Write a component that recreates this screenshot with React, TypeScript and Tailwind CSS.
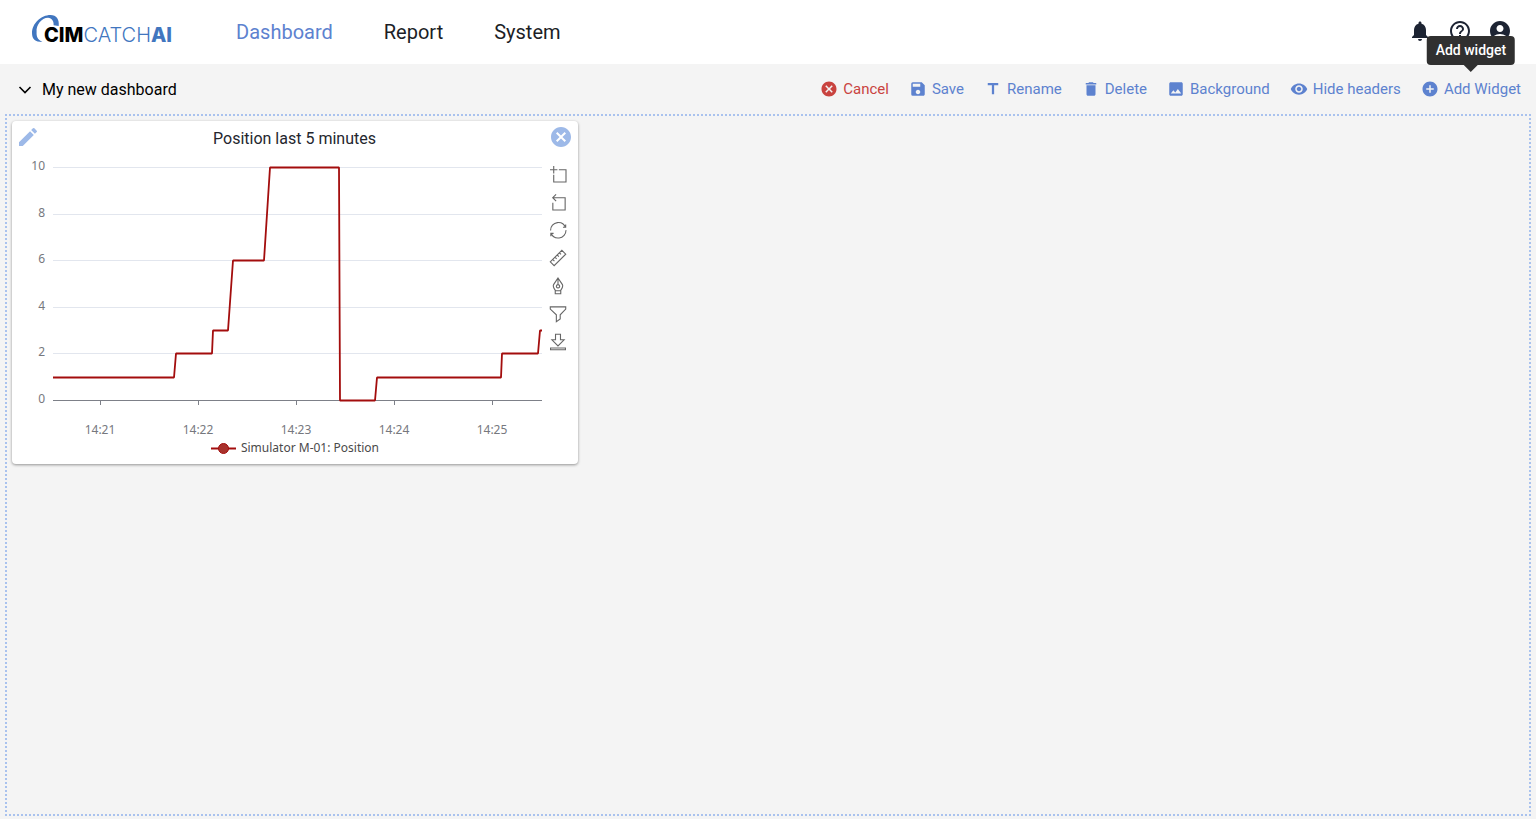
import { ReactNode } from "react";
import {
  MdAccountCircle,
  MdAddCircle,
  MdCancel,
  MdDelete,
  MdHelpOutline,
  MdImage,
  MdModeEditOutline,
  MdNotifications,
  MdRemoveRedEye,
  MdSave,
  MdTitle,
} from "react-icons/md";

const PLOT = { left: 41, right: 530, top: 12, bottom: 245, max: 10 };

const yTicks = [0, 2, 4, 6, 8, 10];

const xTicks = [
  { x: 88, label: "14:21" },
  { x: 186, label: "14:22" },
  { x: 284, label: "14:23" },
  { x: 382, label: "14:24" },
  { x: 480, label: "14:25" },
];

// [x, position]
const series: [number, number][] = [
  [41, 1],
  [162, 1],
  [164, 2],
  [200, 2],
  [201, 3],
  [216, 3],
  [221, 6],
  [252, 6],
  [258, 10],
  [327, 10],
  [328, 0],
  [363, 0],
  [365, 1],
  [489, 1],
  [490, 2],
  [526, 2],
  [528, 3],
  [530, 3],
];

const toY = (value: number) =>
  Math.round(PLOT.bottom - (value / PLOT.max) * (PLOT.bottom - PLOT.top)) + 0.5;

function Logo() {
  return (
    <a
      href="#"
      className="flex items-end pb-1 font-[Inter,sans-serif] text-xl leading-6"
      aria-label="CIMCATCHAI"
    >
      <svg className="-mr-4 mb-[5px] h-7 w-7" viewBox="0 0 28 28" aria-hidden="true">
        <path
          fill="#4176bf"
          d="M26.7 12 C27.5 5.500 24.500 1 18.500 1 C9 1 0 9.500 0 19 C0 25 3 28 10.500 28 C5.500 25.500 4.300 22.500 4.600 18 C4 11 9.500 3.800 16 3.800 C20 4 22 7.500 21.600 11.200 Z"
        />
      </svg>
      <span className="font-extrabold text-black">CIM</span>
      <span className="font-light text-[#4176bf]">CATCH</span>
      <span className="font-extrabold text-[#4176bf]">AI</span>
    </a>
  );
}

function Header() {
  return (
    <header className="flex h-16 items-center bg-white pr-6 pl-8">
      <Logo />
      <nav className="ml-16 flex gap-[51px] text-xl text-[#1c1e26]">
        <a href="#" className="text-[#5d82cf]">
          Dashboard
        </a>
        <a href="#">Report</a>
        <a href="#">System</a>
      </nav>
      <div className="ml-auto flex gap-4 pb-[2px] text-2xl text-[#1d2433]">
        <button type="button" aria-label="Notifications">
          <MdNotifications />
        </button>
        <button type="button" aria-label="Help">
          <MdHelpOutline />
        </button>
        <button type="button" aria-label="Account">
          <MdAccountCircle />
        </button>
      </div>
    </header>
  );
}

interface ToolbarButtonProps {
  icon: ReactNode;
  label: string;
  danger?: boolean;
}

function ToolbarButton({ icon, label, danger }: ToolbarButtonProps) {
  return (
    <button
      type="button"
      className={`flex items-center gap-[5px] whitespace-nowrap ${
        danger ? "text-[#c9433f]" : "text-[#5d82cf]"
      }`}
    >
      <span className="text-lg">{icon}</span>
      {label}
    </button>
  );
}

function Toolbar() {
  return (
    <div className="flex h-[50px] items-center justify-between pr-[15px] pl-4">
      <button type="button" className="flex items-center gap-2 pt-[2px] text-base text-black">
        <svg className="h-[18px] w-[18px]" viewBox="0 0 18 18" fill="none" stroke="currentColor" strokeWidth="1.600">
          <path d="M3.500 6 L9 11.500 L14.500 6" />
        </svg>
        My new dashboard
      </button>
      <div className="flex items-center gap-5 text-[15px]">
        <ToolbarButton icon={<MdCancel />} label="Cancel" danger />
        <ToolbarButton icon={<MdSave />} label="Save" />
        <ToolbarButton icon={<MdTitle />} label="Rename" />
        <ToolbarButton icon={<MdDelete />} label="Delete" />
        <ToolbarButton icon={<MdImage />} label="Background" />
        <ToolbarButton icon={<MdRemoveRedEye />} label="Hide headers" />
        <div className="relative">
          <ToolbarButton icon={<MdAddCircle />} label="Add Widget" />
          <div
            role="tooltip"
            className="absolute bottom-full left-1/2 mb-[13px] -translate-x-1/2 rounded bg-[#303030] px-[9px] py-1 text-sm leading-[21px] font-medium whitespace-nowrap text-white"
          >
            Add widget
            <span className="absolute top-full left-1/2 -translate-x-1/2 border-x-[7px] border-t-[7px] border-x-transparent border-t-[#303030]" />
          </div>
        </div>
      </div>
    </div>
  );
}

function PositionChart() {
  const points = series.map(([x, value]) => `${x},${toY(value)}`).join(" ");

  return (
    <svg width="530" height="284" viewBox="0 0 530 284" className="text-xs">
      {/* Grid and y axis */}
      {yTicks.map((tick) => (
        <g key={tick}>
          <line
            x1={PLOT.left}
            x2={PLOT.right}
            y1={toY(tick)}
            y2={toY(tick)}
            stroke={tick === 0 ? "#7d8088" : "#e2e6ee"}
          />
          <text x="33" y={toY(tick) + 2.5} textAnchor="end" fill="#76787e">
            {tick}
          </text>
        </g>
      ))}

      {/* X axis */}
      {xTicks.map(({ x, label }) => (
        <g key={label}>
          <line x1={x + 0.5} x2={x + 0.5} y1="245" y2="250" stroke="#7d8088" />
          <text x={x} y="279" textAnchor="middle" fill="#76787e">
            {label}
          </text>
        </g>
      ))}

      <polyline points={points} fill="none" stroke="#a30d0d" strokeWidth="1.800" strokeLinejoin="bevel" />
    </svg>
  );
}

const tools = [
  { label: "Zoom", d: "M0,13.5h26.9 M13.5,26.9V0 M32.1,13.5H58V58H13.5 V32.1" },
  { label: "Zoom reset", d: "M22,1.4L9.9,13.5l12.3,12.3 M10.3,13.5H54.9v44.6 H10.3v-26" },
  {
    label: "Restore",
    d: "M47,18.9h9.8V8.7 M56.3,20.1 C52.1,9,40.5,0.6,26.8,2.1C12.6,3.7,1.6,16.2,2.1,30.6 M13,41.1H3.1v10.2 M3.7,39.9c4.2,11.1,15.8,19.5,29.5,18 c14.2-1.6,25.2-14.1,24.7-28.5",
  },
  {
    label: "Measure",
    d: "M1,43 L43,1 L57,15 L15,57 Z M10,34 L16,40 M18,26 L24,32 M26,18 L32,24 M34,10 L40,16",
  },
  {
    label: "Annotate",
    d: "M29,0 L45,24 Q49,32 38,46 H20 Q9,32 13,24 Z M29,0 V24 M29,24 a6,6 0 1 0 0.1,0 M19,46 H39 V57 H19 Z",
  },
  { label: "Filter", d: "M1,3 H57 V11 L37,32 V47 L23,57 V32 L1,11 Z" },
  { label: "Download", d: "M20,1 H38 V21 H51 L29,43 L7,21 H20 Z M2,51 H56 V57 H2 Z" },
];

function Widget() {
  return (
    <section className="w-[566px] rounded bg-white pb-[7px] shadow-[0_1px_3px_rgba(0,0,0,0.4)]">
      <div className="flex h-[34px] items-center justify-between pr-[5px] pb-[2px] pl-1 text-[#9db9e8]">
        <button type="button" aria-label="Edit widget" className="text-2xl">
          <MdModeEditOutline />
        </button>
        <h2 className="pt-1 text-base text-[#24262e]">Position last 5 minutes</h2>
        <button type="button" aria-label="Remove widget" className="text-2xl">
          <MdCancel />
        </button>
      </div>
      <div className="flex font-['Noto_Sans',sans-serif]">
        <PositionChart />
        <div className="flex flex-col gap-3 pt-[11px] pl-2">
          {tools.map(({ label, d }) => (
            <button key={label} type="button" aria-label={label}>
              <svg className="h-4 w-4 overflow-visible" viewBox="0 0 58 58" fill="none" stroke="#666" strokeWidth="4">
                <path d={d} />
              </svg>
            </button>
          ))}
        </div>
      </div>
      <div className="flex items-center justify-center gap-[5px] font-['Noto_Sans',sans-serif] text-xs leading-[18px] text-[#4a4a4a]">
        <svg width="25" height="12" viewBox="0 0 25 12">
          <path d="M0 6.500H25" stroke="#a30d0d" strokeWidth="2" />
          <circle cx="12.500" cy="6.500" r="5" fill="#a8322d" stroke="#a30d0d" />
        </svg>
        Simulator M-01: Position
      </div>
    </section>
  );
}

export default function App() {
  return (
    <div className="flex min-h-screen flex-col bg-[#f4f4f4] font-[Roboto,sans-serif]">
      <Header />
      <Toolbar />
      <main className="mx-[5px] mb-[3px] flex-1 border-2 border-dotted border-[#a9c2ee] p-[5px]">
        <Widget />
      </main>
    </div>
  );
}
